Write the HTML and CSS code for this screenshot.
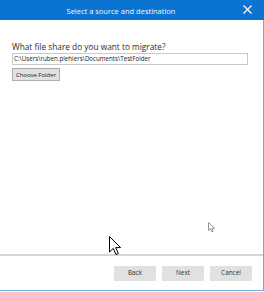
FILE: index.html
```html
<!DOCTYPE html>
<html>
<head>
<meta charset="utf-8">
<link rel="stylesheet" href="styles.css">
</head>
<body>
<div class="window">
  <header class="titlebar">
    <span class="title">Select a source and destination</span>
    <span class="close">
      <svg width="9" height="9" viewBox="0 0 9 9"><path d="M0.5 0.5 L8.5 8.5 M8.5 0.5 L0.5 8.5" stroke="#fff" stroke-width="1.1" fill="none"/></svg>
    </span>
  </header>
  <main class="content">
    <div class="question">What file share do you want to migrate?</div>
    <div class="path">C:\Users\ruben.plehiers\Documents\TestFolder</div>
    <div class="row"><button class="btn choose">Choose Folder</button></div>
  </main>
  <footer class="actions">
    <button class="btn act">Back</button>
    <button class="btn act">Next</button>
    <button class="btn act">Cancel</button>
  </footer>
  <svg class="cursor big" width="14" height="20" viewBox="0 0 14 20"><path d="M0.5 0.5 L0.5 16 L4.3 12.4 L7 18.5 L9.3 17.5 L6.7 11.6 L11.6 11.6 Z" fill="#fff" stroke="#000" stroke-width="1" stroke-linejoin="miter"/></svg>
  <svg class="cursor small" width="9" height="11" viewBox="0 0 9 11"><path d="M0.5 0.5 L0.5 8.5 L2.5 6.8 L3.8 9.8 L5 9.3 L3.8 6.4 L6.5 6.4 Z" fill="#fff" stroke="#8a8a8a" stroke-width="0.9"/></svg>
</div>
</body>
</html>
```
FILE: styles.css
```css
* { box-sizing: border-box; }
html, body { margin: 0; padding: 0; background: #fff; }
body { width: 264px; height: 292px; overflow: hidden; font-family: "Open Sans", "Noto Sans", sans-serif; }
.window {
  position: relative;
  width: 264px;
  height: 291px;
  display: flex;
  flex-direction: column;
  border-right: 1px solid #6aaee3;
  border-bottom: 1px solid #6aaee3;
}
.titlebar {
  height: 20px;
  flex: none;
  background: #0a74d0;
  display: flex;
  align-items: center;
  margin-right: -1px;
}
.title {
  width: 242px;
  text-align: center;
  color: #f4f8fd;
  font-size: 7.5px;
  padding-top: 1px;
}
.close {
  display: flex;
  align-items: center;
  padding-left: 1px;
  height: 20px;
  padding-bottom: 1px;
}
.content {
  flex: 1;
  padding: 20px 15px 0 12px;
  display: flex;
  flex-direction: column;
}
.question {
  font-size: 8.3px;
  line-height: 13px;
  color: #2b2b2b;
}
.path {
  height: 12px;
  border: 1px solid #c9c9c9;
  font-size: 6.2px;
  line-height: 10px;
  padding-left: 1px;
  color: #222;
  white-space: nowrap;
  overflow: hidden;
}
.row { margin-top: 3px; display: flex; }
.btn {
  font-family: "Open Sans", "Noto Sans", sans-serif;
  background: #e1e1e1;
  border: 1px solid #adadad;
  color: #222;
  padding: 0;
  margin: 0;
  font-size: 6px;
  line-height: 1;
}
.choose { width: 48px; height: 13px; }
.actions {
  flex: none;
  height: 36px;
  border-top: 2px solid #d4d4d4;
  display: flex;
  justify-content: flex-end;
  gap: 6px;
  padding: 10px 11px 0 0;
}
.act {
  width: 42px;
  height: 15px;
  border-color: #e1e1e1;
  color: #333;
  font-size: 6.4px;
}
.cursor { position: absolute; }
.cursor.big { left: 109px; top: 236px; }
.cursor.small { left: 208px; top: 222px; }
```
